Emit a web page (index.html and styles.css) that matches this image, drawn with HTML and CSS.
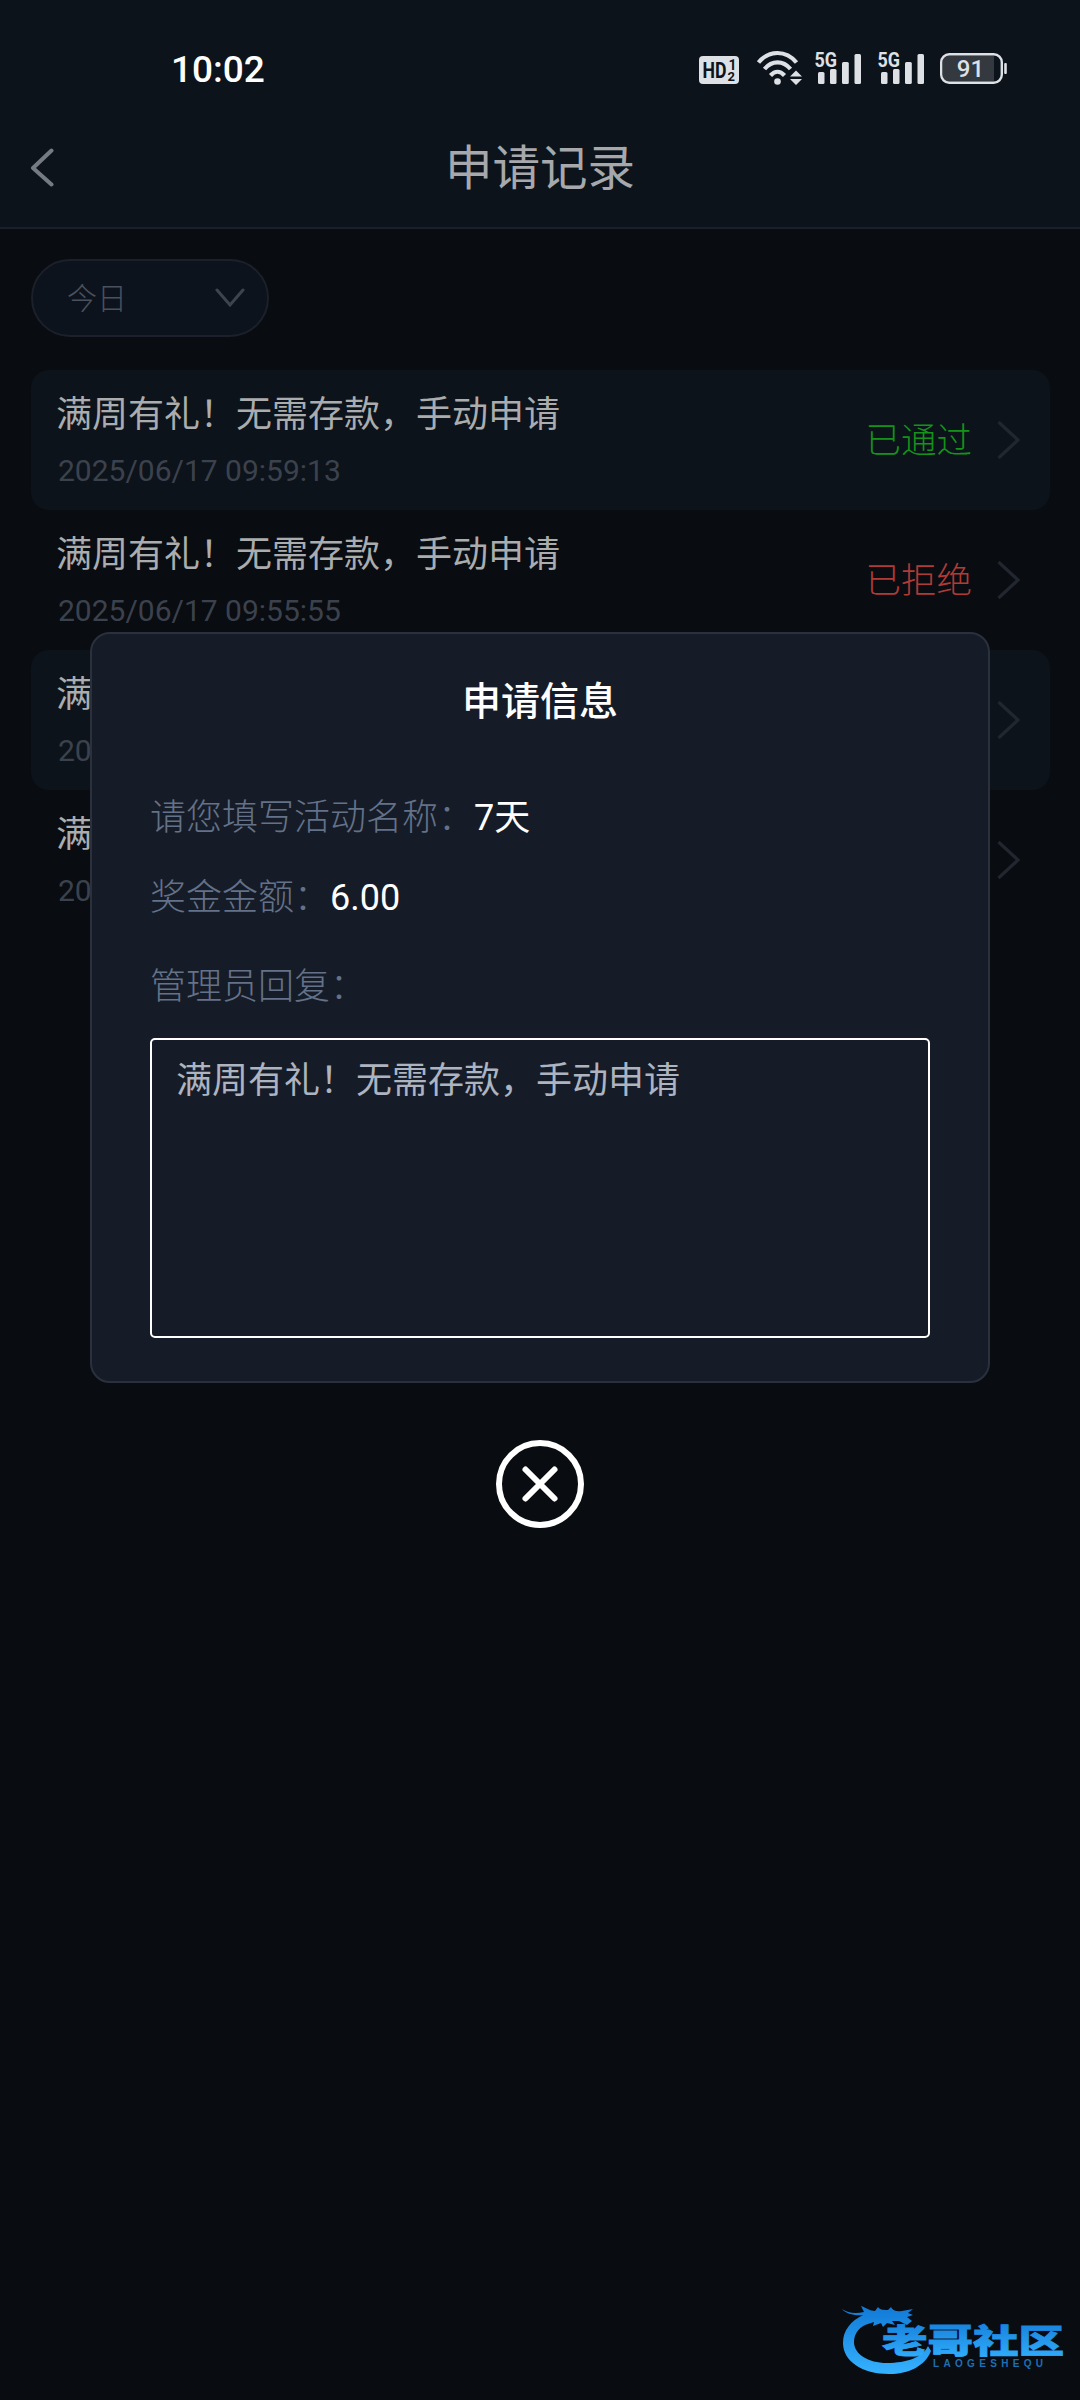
FILE: index.html
```html
<!DOCTYPE html>
<html lang="zh-CN">
<head>
<meta charset="utf-8">
<title>申请记录</title>
<link rel="stylesheet" href="styles.css">
</head>
<body>
<div class="page">
  <header class="header">
    <div class="statusbar">
      <span class="clock">10:02</span>
      <svg class="status-icons" width="310" height="40" viewBox="698 50 310 40">
        <rect x="699" y="56" width="40" height="28" rx="4" fill="#dde1e6"/>
        <g class="icon-text" fill="#0d131b" font-weight="700">
          <text x="702.500" y="78" font-size="22" textLength="24" lengthAdjust="spacingAndGlyphs">HD</text>
          <text x="728.500" y="69.500" font-size="14">1</text>
          <text x="727.500" y="80.500" font-size="13">2</text>
        </g>
        <g fill="none" stroke="#dde1e6" stroke-width="4.200">
          <path d="M758.500 62.500C769 49.800 786 49.800 796.500 62.500"/>
          <path d="M764.500 69C772 60.200 783 60.200 790.500 69"/>
          <path d="M770.500 75.500C775 70.500 780 70.500 784.500 75.500"/>
        </g>
        <g fill="#dde1e6">
          <circle cx="777.500" cy="81.500" r="3.300"/>
          <path d="M790 76.500l6-6 6 6zM790 79h12l-6 6z"/>
        </g>
        <g id="signal" fill="#dde1e6">
          <text class="icon-text" x="814.500" y="67" font-size="20.500" font-weight="700" textLength="22.500" lengthAdjust="spacingAndGlyphs">5G</text>
          <rect x="818" y="72" width="6.500" height="12" rx="1.500"/>
          <rect x="830" y="69" width="6.500" height="15" rx="1.500"/>
          <rect x="842" y="62" width="6.800" height="22" rx="1.500"/>
          <rect x="854.500" y="54" width="6.500" height="30" rx="1.500"/>
        </g>
        <use href="#signal" x="63"/>
        <path d="M948 55.500h46v26h-46a5 5 0 0 1-5-5v-16a5 5 0 0 1 5-5z" fill="#34383f"/>
        <rect x="941.200" y="54.200" width="60.600" height="28.600" rx="8" fill="none" stroke="#dde1e6" stroke-width="2.400"/>
        <rect x="1004.200" y="63" width="2.600" height="11" rx="1" fill="#dde1e6"/>
        <text class="icon-text" x="970.500" y="77" font-size="24" font-weight="500" fill="#dde1e6" text-anchor="middle">91</text>
      </svg>
    </div>
    <div class="titlebar">
      <svg class="back" width="26" height="40" viewBox="0 0 26 40"><path d="M22.500 3.500 4 21l18.500 16.500"/></svg>
      <h1 class="title">申请记录</h1>
    </div>
  </header>

  <div class="filter">
    <span>今日</span>
    <svg width="30" height="20" viewBox="0 0 30 20"><path d="M2 2l13 15L28 2"/></svg>
  </div>

  <ul class="records">
    <li class="record">
      <div class="info"><div class="name">满周有礼！无需存款，手动申请</div><div class="date">2025/06/17 09:59:13</div></div>
      <span class="state passed">已通过</span>
      <svg class="arrow" width="26" height="40" viewBox="0 0 26 40"><path d="M2.500 2 22 20 2.500 38"/></svg>
    </li>
    <li class="record">
      <div class="info"><div class="name">满周有礼！无需存款，手动申请</div><div class="date">2025/06/17 09:55:55</div></div>
      <span class="state refused">已拒绝</span>
      <svg class="arrow" width="26" height="40" viewBox="0 0 26 40"><path d="M2.500 2 22 20 2.500 38"/></svg>
    </li>
    <li class="record">
      <div class="info"><div class="name">满</div><div class="date">20</div></div>
      <svg class="arrow" width="26" height="40" viewBox="0 0 26 40"><path d="M2.500 2 22 20 2.500 38"/></svg>
    </li>
    <li class="record">
      <div class="info"><div class="name">满</div><div class="date">20</div></div>
      <svg class="arrow" width="26" height="40" viewBox="0 0 26 40"><path d="M2.500 2 22 20 2.500 38"/></svg>
    </li>
  </ul>
</div>

<div class="overlay">
  <section class="dialog">
    <h2 class="dialog-title">申请信息</h2>
    <div class="field"><span class="label">请您填写活动名称：</span><span class="value">7天</span></div>
    <div class="field"><span class="label">奖金金额：</span><span class="value">6.00</span></div>
    <div class="field reply-label"><span class="label">管理员回复：</span></div>
    <div class="reply">满周有礼！无需存款，手动申请</div>
  </section>
  <svg class="close" width="88" height="88" viewBox="0 0 88 88">
    <circle cx="44" cy="44" r="41"/>
    <path d="M29.500 29.500l29 29M58.500 29.500l-29 29"/>
  </svg>
</div>

<svg class="watermark" width="240" height="90" viewBox="0 0 240 90">
  <defs>
    <linearGradient id="blue" x1="0" y1="0" x2="0" y2="1">
      <stop offset="0" stop-color="#1179d6"/>
      <stop offset="1" stop-color="#35b2ff"/>
    </linearGradient>
  </defs>
  <path fill="url(#blue)" d="M2 9c6 4 13 5 22 3l-3-6c6 2 9 5 14 5l3-4c2 3 6 3 10 3l3-3c2 4 6 5 11 4l11-2-5 4 5 2-6 2 5 4-5 4-8-4-7 0 3 4-8-2-4 4-2-4-8 3 1-4-6 2C20 26 14 33 14 42c0 12 14 21 33 21 20 0 36-6 41-17l3 5C85 66 69 74 49 74 22 74 3 61 3 43 3 30 11 21 23 15c-8 1-17-1-21-6z"/>
  <text class="brand" x="42" y="53" font-size="33" textLength="182" lengthAdjust="spacingAndGlyphs" fill="url(#blue)" stroke="url(#blue)">老哥社区</text>
  <text class="brand-latin" x="93" y="67" font-size="10" textLength="110" lengthAdjust="spacing" fill="#1c70b4">LAOGESHEQU</text>
</svg>
</body>
</html>
```
FILE: styles.css
```css
* {
  box-sizing: border-box;
}

body {
  margin: 0;
  background: #090c11;
  font-family: Roboto, "Noto Sans CJK SC", sans-serif;
  color: #fff;
}

.page {
  height: 2400px;
}

.header {
  height: 229px;
  background: #0d131b;
  border-bottom: 2px solid #1b1f29;
}

.statusbar {
  display: flex;
  justify-content: space-between;
  align-items: center;
  height: 106px;
  padding: 34px 72px 0 171px;
}

.clock {
  font-size: 37px;
  font-weight: 500;
  line-height: 40px;
}

.icon-text {
  font-family: Roboto, sans-serif;
}

.titlebar {
  display: flex;
  align-items: center;
  height: 122px;
  padding: 0 29px;
}

.back {
  fill: none;
  stroke: #767b82;
  stroke-width: 4;
  stroke-linecap: round;
  stroke-linejoin: round;
}

.title {
  flex: 1;
  margin: 3px 26px 0 0;
  text-align: center;
  font-size: 47.5px;
  font-weight: 400;
  line-height: 60px;
  color: #a6a8ab;
}

.filter {
  display: flex;
  align-items: center;
  justify-content: space-between;
  width: 238px;
  height: 78px;
  margin: 30px 0 0 31px;
  padding: 0 22px 0 34px;
  border: 2px solid #1b202a;
  border-radius: 39px;
  background: #0d131c;
  font-size: 30px;
  font-weight: 300;
  color: #4a515e;
}

.filter span {
  padding-bottom: 4px;
}

.filter svg {
  fill: none;
  stroke: #3e434d;
  stroke-width: 3;
  stroke-linecap: round;
}

.records {
  list-style: none;
  margin: 33px 30px 0 31px;
  padding: 0;
}

.record {
  display: flex;
  align-items: center;
  height: 140px;
  padding: 0 28px 0 25px;
  border-radius: 18px;
}

.record:nth-child(odd) {
  background: #0d131a;
}

.info {
  flex: 1;
  padding-top: 1px;
}

.name {
  font-size: 36px;
  line-height: 50px;
  color: #aaacae;
}

.date {
  margin-top: 11px;
  padding-left: 2px;
  font-size: 30px;
  line-height: 40px;
  color: #3c424d;
}

.state {
  margin-right: 24px;
  padding-bottom: 6px;
  font-size: 35.5px;
  font-weight: 300;
}

.passed {
  color: #14921a;
}

.refused {
  color: #b03b36;
}

.arrow {
  fill: none;
  stroke: #22272f;
  stroke-width: 3.2;
}

.overlay {
  position: absolute;
  top: 0;
  left: 0;
  width: 1080px;
  height: 2400px;
  padding-top: 632px;
  display: flex;
  flex-direction: column;
  align-items: center;
  gap: 57px;
}

.dialog {
  width: 900px;
  height: 751px;
  padding: 40px 58px 0;
  border: 2px solid #2a313d;
  border-radius: 20px;
  background: #161c27;
}

.dialog-title {
  margin: 0 0 58px;
  text-align: center;
  font-size: 39px;
  font-weight: 500;
  line-height: 56px;
}

.field {
  height: 60px;
  margin-bottom: 20px;
  font-size: 36px;
  line-height: 60px;
  white-space: nowrap;
}

.label {
  font-weight: 300;
  color: #647289;
}

.reply-label {
  margin: 29px 0 21px;
}

.reply {
  width: 780px;
  height: 300px;
  padding: 16px 24px;
  border: 2px solid #fff;
  border-radius: 5px;
  font-size: 36px;
  line-height: 50px;
  color: #adb3bf;
}

.close {
  fill: none;
  stroke: #fff;
  stroke-width: 6;
  stroke-linecap: round;
}

.watermark {
  position: absolute;
  left: 840px;
  top: 2300px;
}

.brand {
  font-family: "Noto Sans CJK SC", sans-serif;
  font-weight: 900;
  stroke-width: 0.8px;
}

.brand-latin {
  font-family: "Liberation Sans", sans-serif;
  font-weight: 700;
}
```
